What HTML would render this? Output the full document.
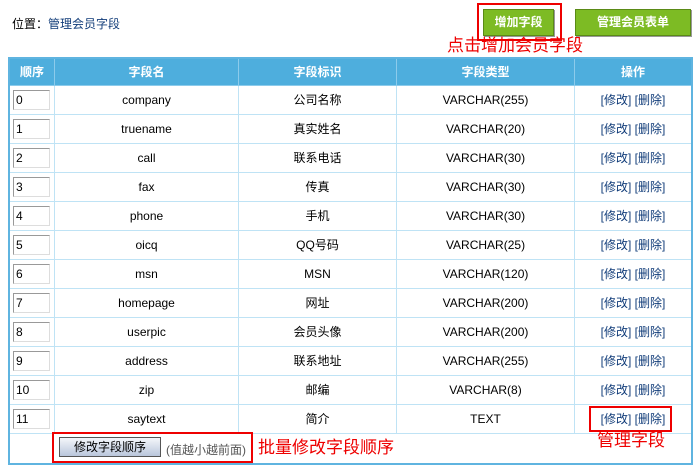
<!DOCTYPE html><html><head><meta charset="utf-8"><style>
body{margin:0;width:700px;height:473px;background:#fff;font-family:"Liberation Sans","Noto Sans CJK SC",sans-serif;font-size:12px;color:#000;position:relative;overflow:hidden}
.a{position:absolute}
table{position:absolute;left:8px;top:57px;width:685px;border-collapse:collapse;border:2px solid #5fb4e0}
td,th{border:1px solid #bfe3f5;text-align:center;height:28px;padding:0;line-height:14px}
th{background:#4eaedd;color:#fff;font-weight:bold;height:26px;border-color:#8ccbeb}
.in{width:33px;height:18px;border:1px solid #999;border-right-color:#ddd;border-bottom-color:#ddd;text-align:left;padding-left:2px;line-height:18px;margin-left:3px}
.op{color:#123d7a}
.btn{background:#7dbb24;color:#fff;font-weight:bold;text-align:center;line-height:25px;border:1px solid #5a8a16;box-shadow:1px 1px 0 #999}
.red{color:#e00;font-size:17px;line-height:20px;z-index:2}
</style></head><body>
<div class="a" style="left:12px;top:15px">位置：<span style="color:#123d7a">管理会员字段</span></div>
<div class="a" style="left:477px;top:3px;width:81px;height:34px;border:2px solid #e00"></div>
<div class="a btn" style="left:483px;top:9px;width:69px;height:25px">增加字段</div>
<div class="a btn" style="left:575px;top:9px;width:114px;height:25px">管理会员表单</div>
<div class="a red" style="left:447px;top:36px">点击增加会员字段</div>
<table>
<tr><th style="width:44px">顺序</th><th style="width:183px">字段名</th><th style="width:157px">字段标识</th><th style="width:177px">字段类型</th><th>操作</th></tr>
<tr><td><div class="in">0</div></td><td>company</td><td>公司名称</td><td>VARCHAR(255)</td><td class="op">[修改] [删除]</td></tr>
<tr><td><div class="in">1</div></td><td>truename</td><td>真实姓名</td><td>VARCHAR(20)</td><td class="op">[修改] [删除]</td></tr>
<tr><td><div class="in">2</div></td><td>call</td><td>联系电话</td><td>VARCHAR(30)</td><td class="op">[修改] [删除]</td></tr>
<tr><td><div class="in">3</div></td><td>fax</td><td>传真</td><td>VARCHAR(30)</td><td class="op">[修改] [删除]</td></tr>
<tr><td><div class="in">4</div></td><td>phone</td><td>手机</td><td>VARCHAR(30)</td><td class="op">[修改] [删除]</td></tr>
<tr><td><div class="in">5</div></td><td>oicq</td><td>QQ号码</td><td>VARCHAR(25)</td><td class="op">[修改] [删除]</td></tr>
<tr><td><div class="in">6</div></td><td>msn</td><td>MSN</td><td>VARCHAR(120)</td><td class="op">[修改] [删除]</td></tr>
<tr><td><div class="in">7</div></td><td>homepage</td><td>网址</td><td>VARCHAR(200)</td><td class="op">[修改] [删除]</td></tr>
<tr><td><div class="in">8</div></td><td>userpic</td><td>会员头像</td><td>VARCHAR(200)</td><td class="op">[修改] [删除]</td></tr>
<tr><td><div class="in">9</div></td><td>address</td><td>联系地址</td><td>VARCHAR(255)</td><td class="op">[修改] [删除]</td></tr>
<tr><td><div class="in">10</div></td><td>zip</td><td>邮编</td><td>VARCHAR(8)</td><td class="op">[修改] [删除]</td></tr>
<tr><td><div class="in">11</div></td><td>saytext</td><td>简介</td><td>TEXT</td><td class="op">[修改] [删除]</td></tr>
<tr><td colspan="5" style="height:29px;border-color:#fff"></td></tr>
</table>
<div class="a" style="left:589px;top:406px;width:79px;height:22px;border:2px solid #e00"></div>
<div class="a red" style="left:597px;top:431px">管理字段</div>
<div class="a" style="left:52px;top:432px;width:197px;height:27px;border:2px solid #e00"></div>
<div class="a" style="left:59px;top:437px;width:100px;height:18px;border:1px solid #555;background:linear-gradient(#f4f6fa,#b9c6dc);text-align:center;line-height:18px">修改字段顺序</div>
<div class="a" style="left:166px;top:441px;color:#555">(值越小越前面)</div>
<div class="a red" style="left:258px;top:438px">批量修改字段顺序</div>
</body></html>
